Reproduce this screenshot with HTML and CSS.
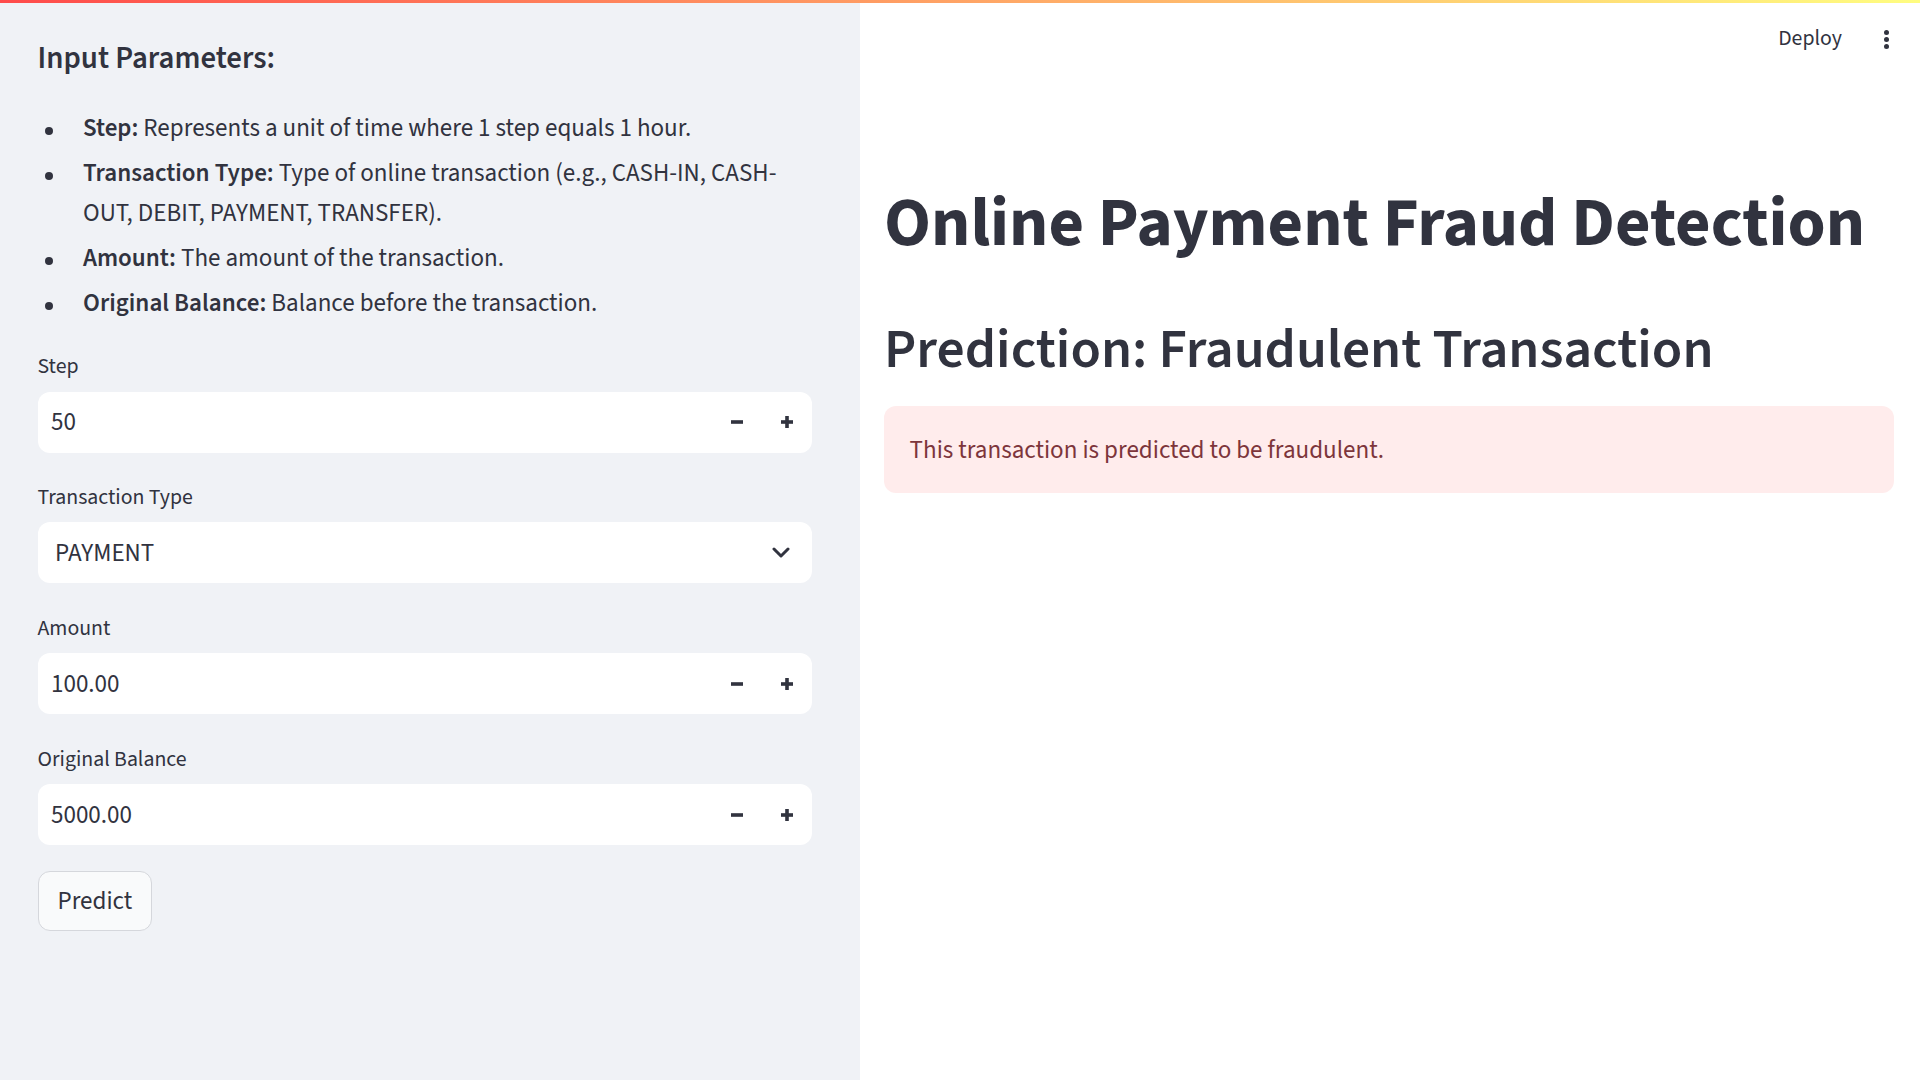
FILE: index.html
```html
<!DOCTYPE html>
<html lang="en">
<head>
<meta charset="utf-8">
<title>Online Payment Fraud Detection</title>
<link rel="stylesheet" href="styles.css">
</head>
<body>
<div class="decoration"></div>
<div class="app">
  <aside class="sidebar">
    <h4 class="side-title">Input Parameters:</h4>
    <ul class="param-list">
      <li><span><strong>Step:</strong> Represents a unit of time where 1 step equals 1 hour.</span></li>
      <li><span><strong>Transaction Type:</strong> Type of online transaction (e.g., CASH-IN, CASH-<br>OUT, DEBIT, PAYMENT, TRANSFER).</span></li>
      <li><span><strong>Amount:</strong> The amount of the transaction.</span></li>
      <li><span><strong>Original Balance:</strong> Balance before the transaction.</span></li>
    </ul>

    <div class="widget">
      <div class="widget-label">Step</div>
      <div class="num-input">
        <span class="num-value">50</span>
        <span class="step-btn"><svg viewBox="0 0 12 12" width="12" height="12"><rect x="0" y="4.2" width="12" height="3.6" fill="#31333f"/></svg></span>
        <span class="step-btn"><svg viewBox="0 0 12 12" width="12" height="12"><rect x="0" y="4.2" width="12" height="3.6" fill="#31333f"/><rect x="4.2" y="0" width="3.6" height="12" fill="#31333f"/></svg></span>
      </div>
    </div>

    <div class="widget">
      <div class="widget-label">Transaction Type</div>
      <div class="select-box">
        <span class="select-value">PAYMENT</span>
        <svg class="chevron" viewBox="0 0 18 11" width="18" height="11"><path d="M2 2 L9 9 L16 2" fill="none" stroke="#31333f" stroke-width="3" stroke-linecap="round" stroke-linejoin="round"/></svg>
      </div>
    </div>

    <div class="widget">
      <div class="widget-label">Amount</div>
      <div class="num-input">
        <span class="num-value">100.00</span>
        <span class="step-btn"><svg viewBox="0 0 12 12" width="12" height="12"><rect x="0" y="4.2" width="12" height="3.6" fill="#31333f"/></svg></span>
        <span class="step-btn"><svg viewBox="0 0 12 12" width="12" height="12"><rect x="0" y="4.2" width="12" height="3.6" fill="#31333f"/><rect x="4.2" y="0" width="3.6" height="12" fill="#31333f"/></svg></span>
      </div>
    </div>

    <div class="widget">
      <div class="widget-label">Original Balance</div>
      <div class="num-input">
        <span class="num-value">5000.00</span>
        <span class="step-btn"><svg viewBox="0 0 12 12" width="12" height="12"><rect x="0" y="4.2" width="12" height="3.6" fill="#31333f"/></svg></span>
        <span class="step-btn"><svg viewBox="0 0 12 12" width="12" height="12"><rect x="0" y="4.2" width="12" height="3.6" fill="#31333f"/><rect x="4.2" y="0" width="3.6" height="12" fill="#31333f"/></svg></span>
      </div>
    </div>

    <button class="predict-btn" type="button">Predict</button>
  </aside>

  <main class="main">
    <header class="topbar">
      <span class="deploy">Deploy</span>
      <span class="menu-dots"><i></i><i></i><i></i></span>
    </header>
    <h1 class="title">Online Payment Fraud Detection</h1>
    <h2 class="subtitle">Prediction: Fraudulent Transaction</h2>
    <div class="alert-error">This transaction is predicted to be fraudulent.</div>
  </main>
</div>
</body>
</html>
```
FILE: styles.css
```css
html, body {
  margin: 0;
  padding: 0;
  width: 1920px;
  height: 1080px;
  overflow: hidden;
  background: #ffffff;
}
body {
  font-family: "Source Sans 3", "Source Sans Pro", "Lato", "Liberation Sans", sans-serif;
  color: #31333f;
  font-size: 25.05px;
  line-height: 1.6;
}
.decoration {
  height: 3px;
  background: linear-gradient(90deg, #ff4b4b, #fffd80);
}
.app {
  display: flex;
  height: 1077px;
}

/* Sidebar */
.sidebar {
  width: 860px;
  flex: 0 0 860px;
  box-sizing: border-box;
  background: #f0f2f6;
  padding: 37px 48px 0 37.5px;
}
.side-title {
  margin: 0;
  font-size: 30.8px;
  font-weight: 600;
  line-height: 37px;
}
.param-list {
  list-style: none;
  margin: 32px 0 0 0;
  padding: 0;
}
.param-list li {
  display: grid;
  grid-template-columns: 45.5px 1fr;
  line-height: 39.7px;
  margin-bottom: 5.3px;
}
.param-list li:last-child { margin-bottom: 0; }
.param-list li::before {
  content: "";
  width: 8px;
  height: 8px;
  border-radius: 50%;
  background: #31333f;
  margin: 18px 0 0 7.5px;
}
.param-list strong { font-weight: 600; }

.widget { margin-top: 26.5px; }
.param-list + .widget { margin-top: 24.8px; }
.widget-label {
  height: 37.2px;
  line-height: 37.2px;
  font-size: 21.8px;
  margin-bottom: 6.2px;
}
.num-input, .select-box {
  display: flex;
  align-items: center;
  height: 61px;
  background: #ffffff;
  border-radius: 12px;
  box-sizing: border-box;
}
.num-input { padding-left: 13.5px; }
.num-value { flex: 1; }
.step-btn {
  width: 50px;
  height: 100%;
  display: flex;
  align-items: center;
  justify-content: center;
}
.step-btn svg { display: block; }
.select-box { padding: 0 22px 0 17.5px; }
.select-value { flex: 1; }
.chevron { display: block; }

.predict-btn {
  margin-top: 26px;
  height: 59.5px;
  padding: 0 19px;
  font-family: inherit;
  font-size: 25.05px;
  line-height: 1.6;
  color: #31333f;
  background: #f9fafb;
  border: 1px solid #d5d7dc;
  border-radius: 12px;
}

/* Main */
.main {
  flex: 1;
  padding: 0 26px 0 24px;
}
.topbar {
  display: flex;
  justify-content: flex-end;
  align-items: center;
  height: 72px;
}
.deploy {
  font-size: 21.8px;
  line-height: 33.6px;
  margin-right: 42px;
}
.menu-dots {
  display: flex;
  flex-direction: column;
  gap: 2px;
  margin-right: 5px;
}
.menu-dots i {
  display: block;
  width: 5px;
  height: 5px;
  border-radius: 50%;
  background: #31333f;
}
.title {
  margin: 108px 0 0 0;
  font-size: 68.8px;
  font-weight: 700;
  line-height: 82px;
}
.subtitle {
  margin: 51.5px 0 0 0;
  font-size: 55.6px;
  font-weight: 600;
  line-height: 66px;
}
.alert-error {
  margin-top: 23px;
  padding: 25px 26.6px 23px 25.6px;
  background: #ffecec;
  color: #7d353b;
  border-radius: 12px;
  line-height: 39.7px;
}
```
